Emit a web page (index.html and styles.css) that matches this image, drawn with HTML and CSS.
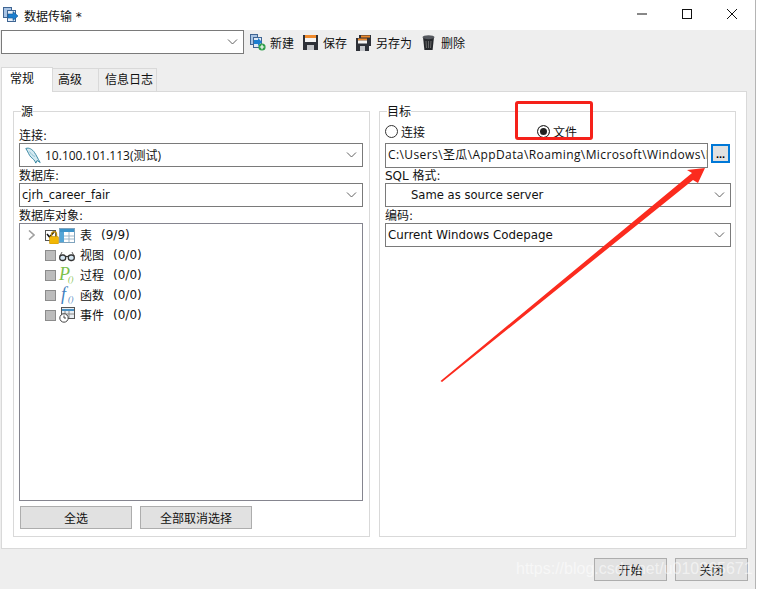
FILE: index.html
```html
<!DOCTYPE html>
<html lang="zh-CN">
  <head>
    <meta charset="UTF-8" />
    <title>数据传输</title>
    <link rel="stylesheet" href="styles.css">
  </head>
  <body>
    <div class="window">
      <div class="titlebar">
        <svg class="title-icon" width="16" height="16" viewBox="0 0 16 16">
          <rect x="0.5" y="0.5" width="8" height="10" fill="#a9c4e4" stroke="#3f6593" />
          <rect x="4.5" y="3.5" width="8" height="11" fill="#e6eef8" stroke="#3f6593" />
          <path d="M5 7h5V4.5L15 9l-5 4.5V11H5z" fill="#1c7fd0" stroke="#14548f" stroke-width="0.6" />
        </svg>
        <span class="title-text">数据传输 *</span>
        <div class="win-controls">
          <svg width="10" height="10" viewBox="0 0 10 10"><path d="M0 5h10" stroke="#111" /></svg>
          <svg width="10" height="10" viewBox="0 0 10 10"><rect x="0.5" y="0.5" width="9" height="9" fill="none" stroke="#111" /></svg>
          <svg width="10" height="10" viewBox="0 0 10 10"><path d="M0 0l10 10M10 0L0 10" stroke="#111" /></svg>
        </div>
      </div>

      <div class="toolbar">
        <div class="combo profile-combo"><span class="combo-text"></span><svg class="chevron" width="11" height="6" viewBox="0 0 11 6"><path d="M1 0.5l4.5 4.5L10 0.5" /></svg></div>
        <div class="tool tool-new">
          <svg width="16" height="17" viewBox="0 0 16 17">
            <rect x="0.5" y="0.5" width="7" height="10" fill="#a9c4e4" stroke="#3f6593" />
            <rect x="3.5" y="3.5" width="8" height="10" fill="#dfe9f5" stroke="#3f6593" />
            <path d="M4 6h4V4l4 4-4 4v-2H4z" fill="#1c7fd0" />
            <circle cx="12" cy="13" r="3.6" fill="#2d9e49" />
            <path d="M12 10.8v4.4M9.8 13h4.4" stroke="#fff" stroke-width="1.2" />
          </svg>
          <span>新建</span>
        </div>
        <div class="tool tool-save">
          <svg width="15" height="15" viewBox="0 0 15 15">
            <rect width="15" height="15" fill="#2e3138" />
            <rect x="2" y="0" width="11" height="3" fill="#ef8a2c" />
            <rect x="2" y="3" width="11" height="4" fill="#f4f4f4" />
            <rect x="4" y="10" width="7" height="5" fill="#c4c6ca" />
          </svg>
          <span>保存</span>
        </div>
        <div class="tool tool-saveas">
          <svg width="15" height="16" viewBox="0 0 15 16">
            <rect x="3" y="0" width="12" height="11" fill="#2e3138" />
            <rect x="5" y="0.5" width="9" height="2" fill="#ef8a2c" />
            <rect x="0" y="3" width="13" height="13" fill="#2e3138" />
            <rect x="2" y="3.5" width="9" height="2" fill="#ef8a2c" />
            <rect x="2" y="5.5" width="9" height="3" fill="#f4f4f4" />
            <rect x="4" y="11" width="5" height="5" fill="#c4c6ca" />
          </svg>
          <span>另存为</span>
        </div>
        <div class="tool tool-delete">
          <svg width="13" height="15" viewBox="0 0 13 15">
            <path d="M1 2h11l-1.4 13H2.4z" fill="#26282c" />
            <ellipse cx="6.5" cy="2.2" rx="6" ry="2" fill="#55585e" />
            <path d="M4 6l.5 7M6.5 6v7M9 6l-.5 7" stroke="#777" stroke-width="0.8" />
          </svg>
          <span>删除</span>
        </div>
      </div>

      <div class="tabs">
        <div class="tab active">常规</div>
        <div class="tab tab-adv">高级</div>
        <div class="tab tab-log">信息日志</div>
      </div>

      <div class="tab-panel">
        <fieldset class="group group-source">
          <legend>源</legend>
          <div class="field-label">连接:</div>
          <div class="combo">
            <svg class="dolphin" width="16" height="17" viewBox="0 0 16 17">
              <path d="M0.8 1.5C4 0.2 7.5 2.5 9.5 5.5c1.8 2.6 3.2 6 5.7 10l-3.2-2-1.2 2.6C9.8 13 7.5 11.5 5.8 10 4 8.2 3.2 5 .8 1.5z" fill="#d4e9f1" stroke="#2a7f9c" stroke-width="0.9" />
              <path d="M4.5 4.5c1.5 2.5 3 4 5.5 5" fill="none" stroke="#7fb7c9" stroke-width="0.8" />
            </svg>
            <span class="combo-text conn-text">10.100.101.113(测试)</span>
            <svg class="chevron" width="11" height="6" viewBox="0 0 11 6"><path d="M1 0.5l4.5 4.5L10 0.5" /></svg>
          </div>
          <div class="field-label">数据库:</div>
          <div class="combo">
            <span class="combo-text db-text">cjrh_career_fair</span>
            <svg class="chevron" width="11" height="6" viewBox="0 0 11 6"><path d="M1 0.5l4.5 4.5L10 0.5" /></svg>
          </div>
          <div class="field-label">数据库对象:</div>
          <div class="tree">
            <div class="tree-row">
              <svg class="expander" width="7" height="10" viewBox="0 0 7 10"><path d="M1 0.5L6 5 1 9.5" /></svg>
              <span class="check on">
                <svg width="11" height="11" viewBox="0 0 11 11"><path d="M2 4l2.5 3L9 2" fill="none" stroke="#111" stroke-width="1.5" /></svg>
              </span>
              <svg class="lock" width="10" height="13" viewBox="0 0 10 13">
                <path d="M2.5 6V3.2a2.5 2.5 0 0 1 5 0V6" fill="none" stroke="#b98a10" stroke-width="1.4" />
                <rect x="0.5" y="5.5" width="9" height="7.5" rx="1" fill="#f2b705" stroke="#c4920a" stroke-width="0.6" />
              </svg>
              <svg class="obj-icon" width="16" height="15" viewBox="0 0 16 15">
                <rect x="0.5" y="0.5" width="15" height="14" fill="#fff" stroke="#7fa3bd" />
                <rect x="1" y="1" width="14" height="3" fill="#3c93c9" />
                <rect x="1" y="4" width="4" height="10" fill="#54a5d6" />
                <path d="M5 8h10M5 11h10M10 4v10" stroke="#9db6c8" />
              </svg>
              <span class="row-name">表</span><span class="row-count">(9/9)</span>
            </div>
            <div class="tree-row">
              <span class="expander-gap"></span>
              <span class="check"></span>
              <svg class="obj-icon" width="16" height="15" viewBox="0 0 16 15">
                <path d="M1 8l2-4M15 8l-2-4" fill="none" stroke="#666" />
                <rect x="0.7" y="7" width="6" height="5.5" rx="2.4" fill="#d5e6f2" stroke="#333" stroke-width="1.3" />
                <rect x="9.3" y="7" width="6" height="5.5" rx="2.4" fill="#d5e6f2" stroke="#333" stroke-width="1.3" />
                <path d="M6.7 8.5h2.6" stroke="#333" stroke-width="1.2" />
              </svg>
              <span class="row-name">视图</span><span class="row-count">(0/0)</span>
            </div>
            <div class="tree-row">
              <span class="expander-gap"></span>
              <span class="check"></span>
              <svg class="obj-icon fn-icon" width="16" height="16" viewBox="0 0 16 16">
                <text x="0" y="13" class="fn-glyph fn-p">P</text>
                <text x="9" y="15" class="fn-sub fn-p">()</text>
              </svg>
              <span class="row-name">过程</span><span class="row-count">(0/0)</span>
            </div>
            <div class="tree-row">
              <span class="expander-gap"></span>
              <span class="check"></span>
              <svg class="obj-icon fn-icon" width="16" height="16" viewBox="0 0 16 16">
                <text x="2" y="13" class="fn-glyph fn-f">f</text>
                <text x="9" y="15" class="fn-sub fn-f">()</text>
              </svg>
              <span class="row-name">函数</span><span class="row-count">(0/0)</span>
            </div>
            <div class="tree-row">
              <span class="expander-gap"></span>
              <span class="check"></span>
              <svg class="obj-icon" width="16" height="16" viewBox="0 0 16 16">
                <rect x="2.5" y="0.5" width="13" height="11" fill="#e9eef2" stroke="#555" />
                <path d="M3 3h12" stroke="#4a90c2" stroke-width="2" />
                <path d="M6 4v7M10 4v7M3 7h12" stroke="#888" />
                <circle cx="5" cy="11" r="4.2" fill="#fff" stroke="#444" />
                <path d="M5 8.5V11h2" fill="none" stroke="#444" />
              </svg>
              <span class="row-name">事件</span><span class="row-count">(0/0)</span>
            </div>
          </div>
          <div class="select-buttons">
            <button class="btn">全选</button>
            <button class="btn">全部取消选择</button>
          </div>
        </fieldset>

        <fieldset class="group group-target">
          <legend>目标</legend>
          <div class="radio-row">
            <label class="radio radio-conn"><span class="radio-dot"></span>连接</label>
            <label class="radio radio-file"><span class="radio-dot checked"></span>文件</label>
          </div>
          <div class="path-row">
            <div class="path-input">C:\Users\圣瓜\AppData\Roaming\Microsoft\Windows\Network</div>
            <button class="browse">...</button>
          </div>
          <div class="field-label">SQL 格式:</div>
          <div class="combo">
            <span class="combo-text sql-text">Same as source server</span>
            <svg class="chevron" width="11" height="6" viewBox="0 0 11 6"><path d="M1 0.5l4.5 4.5L10 0.5" /></svg>
          </div>
          <div class="field-label">编码:</div>
          <div class="combo">
            <span class="combo-text codepage-text">Current Windows Codepage</span>
            <svg class="chevron" width="11" height="6" viewBox="0 0 11 6"><path d="M1 0.5l4.5 4.5L10 0.5" /></svg>
          </div>
        </fieldset>
      </div>

      <div class="footer">
        <button class="btn footer-btn">开始</button>
        <button class="btn footer-btn">关闭</button>
      </div>
    </div>

    <!-- annotations drawn on top of the screenshot -->
    <div class="mark-box"></div>
    <svg class="mark-arrow" width="759" height="589" viewBox="0 0 759 589">
      <path d="M440.500 381L692 173 687 170 705 168 698 183 693 180 442 382z" fill="#fb2b1e" />
    </svg>
    <div class="watermark">https://blog.csdn.net/u010365671</div>
  </body>
</html>
```

FILE: styles.css
```css
* {
  box-sizing: border-box;
}

html,
body {
  margin: 0;
  padding: 0;
  height: 589px;
  overflow: hidden;
  background: white;
}

body {
  position: relative;
  font-family: "DejaVu Sans", "Noto Sans CJK SC", sans-serif;
  font-size: 12px;
  color: #111;
}

.window {
  width: 756px;
  height: 589px;
  background: #eeeeee;
  border-right: 1px solid #b4b4b4;
}

/* Title bar */
.titlebar {
  height: 30px;
  background: white;
  display: flex;
  align-items: center;
  padding-left: 3px;
}

.title-text {
  margin-left: 5px;
}

.win-controls {
  margin-left: auto;
  display: flex;
  gap: 35px;
  margin-right: 18px;
  margin-top: -2px;
}

/* Toolbar */
.toolbar {
  height: 37px;
  display: flex;
  align-items: flex-start;
  padding-left: 1px;
}

.tool {
  display: flex;
  align-items: center;
  gap: 5px;
  height: 25px;
}

.tool-new {
  margin-left: 6px;
  gap: 4px;
}

.tool-save {
  margin-left: 9px;
}

.tool-saveas {
  margin-left: 9px;
}

.tool-delete {
  margin-left: 10px;
  gap: 6px;
}

/* Combo boxes */
.combo {
  height: 24px;
  background: white;
  border: 1px solid #7a7a7a;
  display: flex;
  align-items: center;
  padding-left: 2px;
  padding-right: 5px;
}

.profile-combo {
  width: 243px;
}

.combo-text {
  white-space: nowrap;
  flex: 1;
}

.chevron {
  fill: none;
  stroke: #606060;
  stroke-width: 1;
}

.dolphin {
  margin-left: 3px;
  overflow: visible;
}

.conn-text {
  margin-left: 4px;
  font-family: "Open Sans", "Noto Sans CJK SC", sans-serif;
}

.db-text {
  font-size: 11.4px;
}

.sql-text {
  padding-left: 23px;
  font-size: 11.6px;
}

.codepage-text {
  font-size: 11.85px;
}

/* Tabs */
.tabs {
  height: 24px;
  display: flex;
  align-items: flex-end;
  padding-left: 1px;
  position: relative;
  z-index: 1;
}

.tab {
  height: 23px;
  border: 1px solid #d9d9d9;
  border-left: none;
  border-bottom: none;
  line-height: 23px;
}

.tab.active {
  width: 52px;
  height: 25px;
  margin-bottom: -1px;
  padding-left: 8px;
  background: white;
  border-left: 1px solid #d9d9d9;
}

.tab-adv {
  width: 46px;
  padding-left: 5px;
}

.tab-log {
  width: 58px;
  padding-left: 6px;
}

.tab-panel {
  margin-left: 1px;
  width: 746px;
  height: 458px;
  background: white;
  border: 1px solid #d9d9d9;
  display: flex;
  padding: 11px 10px 0 11px;
  gap: 9px;
}

/* Group boxes */
.group {
  margin: 0;
  width: 357px;
  height: 434px;
  border: 1px solid #d9d9d9;
  padding: 8px 5px 0;
  min-width: 0;
}

.group legend {
  padding: 0;
  margin-left: 2px;
  height: 16px;
  line-height: 18px;
}

.field-label {
  height: 16px;
  line-height: 18px;
}

.tree {
  height: 278px;
  border: 1px solid #85858f;
  padding-top: 1px;
  width: 344px;
}

.group-source .combo {
  width: 344px;
}

.tree-row {
  height: 20px;
  display: flex;
  align-items: center;
  padding-left: 8px;
  position: relative;
}

.expander {
  fill: none;
  stroke: #a0a0a0;
  stroke-width: 1.6;
  width: 7px;
}

.expander-gap {
  width: 7px;
}

.check {
  width: 11px;
  height: 11px;
  margin-left: 10px;
  background: #bcbcbc;
  border: 1px solid #8c8c8c;
  display: flex;
}

.check.on {
  background: white;
  border-color: #555;
}

.check svg {
  margin: -1px;
  flex: none;
}

.lock {
  position: absolute;
  left: 29px;
  top: 6px;
}

.obj-icon {
  margin-left: 3px;
}

.fn-icon {
  overflow: visible;
}

.fn-glyph {
  font-family: "Liberation Serif", serif;
  font-style: italic;
  font-size: 18px;
}

.fn-sub {
  font-family: "Liberation Serif", serif;
  font-style: italic;
  font-size: 8px;
}

.fn-p {
  fill: #7cc04b;
}

.fn-f {
  fill: #3f7fc0;
}

.row-name {
  margin-left: 5px;
  margin-bottom: 2px;
}

.row-count {
  margin-left: 9px;
}

/* Buttons */
.btn {
  font: inherit;
  color: #111;
  background: #e1e1e1;
  border: 1px solid #adadad;
  padding: 0;
  height: 23px;
}

.select-buttons {
  display: flex;
  gap: 8px;
  margin-top: 5px;
  padding-left: 1px;
}

.select-buttons .btn {
  width: 112px;
}

.footer {
  display: flex;
  justify-content: flex-end;
  gap: 8px;
  padding-top: 9px;
  padding-right: 7px;
}

.footer-btn {
  width: 73px;
}

/* Target side */
.group-target {
  padding-top: 4px;
}

.group-target .combo {
  width: 346px;
}

.radio-row {
  height: 20px;
  display: flex;
  padding-bottom: 4px;
}

.radio {
  display: flex;
  align-items: center;
  gap: 3px;
}

.radio-file {
  margin-left: 112px;
}

.radio-dot {
  width: 13px;
  height: 13px;
  border: 1px solid #333;
  border-radius: 50%;
  background: white;
  display: block;
}

.radio-dot.checked {
  box-shadow: inset 0 0 0 2px white;
  background: #222;
}

.path-row {
  display: flex;
  gap: 3px;
  height: 24px;
}

.path-input {
  width: 323px;
  height: 25px;
  border: 1px solid #7a7a7a;
  background: white;
  padding-left: 2px;
  line-height: 22px;
  letter-spacing: 0.4px;
  white-space: nowrap;
  overflow: hidden;
  font-family: "Open Sans", "Noto Sans CJK SC", sans-serif;
}

.browse {
  width: 19px;
  height: 19px;
  margin-top: 1px;
  padding: 0;
  font-family: "Liberation Sans", sans-serif;
  font-size: 11px;
  font-weight: bold;
  line-height: 14px;
  background: #e1e1e1;
  border: 2px solid #0078d7;
}

/* Annotations */
.mark-box {
  position: absolute;
  left: 515px;
  top: 101px;
  width: 78px;
  height: 39px;
  border: 3px solid #f5211a;
  border-radius: 3px;
}

.mark-arrow {
  position: absolute;
  left: 0;
  top: 0;
  pointer-events: none;
}

.watermark {
  position: absolute;
  left: 516px;
  top: 560px;
  font-family: "Liberation Sans", sans-serif;
  font-size: 16px;
  line-height: 18px;
  color: rgba(255, 255, 255, 0.55);
  white-space: nowrap;
}
```
